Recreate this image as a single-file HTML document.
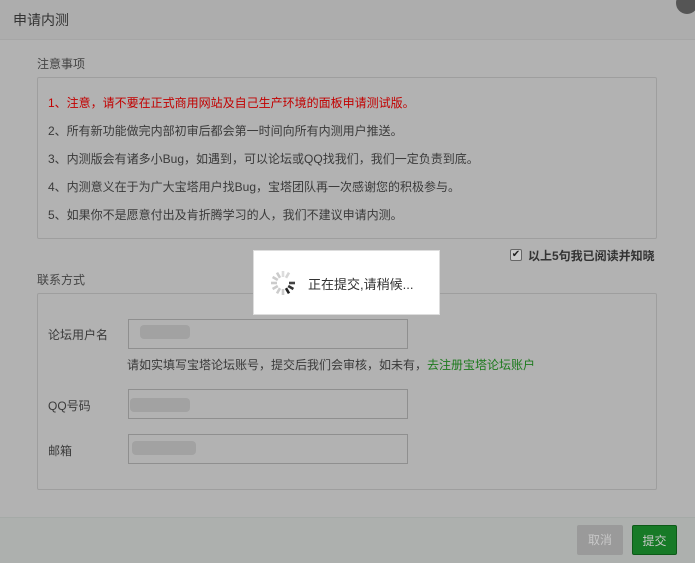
<!DOCTYPE html>
<html><head><meta charset="utf-8"><style>
*{margin:0;padding:0;box-sizing:border-box}
body{width:695px;height:563px;background:#b2b2b2;font-family:"Liberation Sans","Noto Sans CJK SC",sans-serif;font-size:12px;color:#3a3a3a;position:relative;overflow:hidden}
.a{position:absolute;white-space:nowrap}
.hdr{left:0;top:0;width:695px;height:40px;background:#adadad;border-bottom:1px solid #a6a6a6}
.box{border:1px solid #9e9e9e;border-radius:2px}
.inp{border:1px solid #8f8f8f;width:280px;height:30px;background:#b2b2b2}
.blur{background:#a2a2a2;height:14px;border-radius:4px}
.ft{left:0;top:517px;width:695px;height:46px;background:#adb0ae;border-top:1px solid #a5aaa7}
.btn{height:30px;width:46px;border-radius:2px;color:#c8c8c8;text-align:center;line-height:30px}
</style></head><body>
<div class="a hdr"></div>
<div class="a" style="left:13px;top:10px;font-size:14px;color:#333">申请内测</div>
<div class="a" style="left:676px;top:-8px;width:22px;height:22px;border-radius:50%;background:#555"></div>
<div class="a" style="left:37px;top:55px;color:#444">注意事项</div>
<div class="a box" style="left:37px;top:77px;width:620px;height:162px"></div>
<div class="a" style="left:48px;top:94px;color:#c20000">1、注意，请不要在正式商用网站及自己生产环境的面板申请测试版。</div>
<div class="a" style="left:48px;top:122px">2、所有新功能做完内部初审后都会第一时间向所有内测用户推送。</div>
<div class="a" style="left:48px;top:150px">3、内测版会有诸多小Bug，如遇到，可以论坛或QQ找我们，我们一定负责到底。</div>
<div class="a" style="left:48px;top:178px">4、内测意义在于为广大宝塔用户找Bug，宝塔团队再一次感谢您的积极参与。</div>
<div class="a" style="left:48px;top:206px">5、如果你不是愿意付出及肯折腾学习的人，我们不建议申请内测。</div>
<div class="a" style="left:510px;top:249px;width:12px;height:12px;border:1px solid #666;background:#ccc;border-radius:2px;font-size:10px;line-height:10px;text-align:center;color:#222">✔</div>
<div class="a" style="left:528px;top:247px;font-weight:bold;color:#333">以上5句我已阅读并知晓</div>
<div class="a" style="left:37px;top:271px;color:#444">联系方式</div>
<div class="a box" style="left:37px;top:293px;width:620px;height:197px"></div>
<div class="a" style="left:48px;top:326px">论坛用户名</div>
<div class="a inp" style="left:128px;top:319px"></div>
<div class="a blur" style="left:140px;top:325px;width:50px"></div>
<div class="a" style="left:127px;top:356px">请如实填写宝塔论坛账号，提交后我们会审核，如未有，<span style="color:#1d7a1d">去注册宝塔论坛账户</span></div>
<div class="a" style="left:48px;top:397px">QQ号码</div>
<div class="a inp" style="left:128px;top:389px"></div>
<div class="a blur" style="left:130px;top:398px;width:60px"></div>
<div class="a" style="left:48px;top:442px">邮箱</div>
<div class="a inp" style="left:128px;top:434px"></div>
<div class="a blur" style="left:132px;top:441px;width:64px"></div>
<div class="a ft"></div>
<div class="a btn" style="left:577px;top:525px;background:#9a9a9a">取消</div>
<div class="a btn" style="left:632px;top:525px;width:45px;background:#177a27;border:1px solid #0d5a18">提交</div>
<div class="a" style="left:253px;top:250px;width:187px;height:65px;background:#fff;border:1px solid #ddd"></div>
<svg class="a" style="left:268px;top:268px" width="30" height="30" viewBox="-15 -15 30 30">
<g stroke-width="2.6" stroke-linecap="butt">
<line x1="0" y1="-12" x2="0" y2="-6" stroke="#ddd" transform="rotate(0)"/>
<line x1="0" y1="-12" x2="0" y2="-6" stroke="#d6d6d6" transform="rotate(30)"/>
<line x1="0" y1="-12" x2="0" y2="-6" stroke="#444" transform="rotate(90)"/>
<line x1="0" y1="-12" x2="0" y2="-6" stroke="#333" transform="rotate(120)"/>
<line x1="0" y1="-12" x2="0" y2="-6" stroke="#222" transform="rotate(150)"/>
<line x1="0" y1="-12" x2="0" y2="-6" stroke="#ccc" transform="rotate(180)"/>
<line x1="0" y1="-12" x2="0" y2="-6" stroke="#ccc" transform="rotate(210)"/>
<line x1="0" y1="-12" x2="0" y2="-6" stroke="#ccc" transform="rotate(240)"/>
<line x1="0" y1="-12" x2="0" y2="-6" stroke="#ccc" transform="rotate(270)"/>
<line x1="0" y1="-12" x2="0" y2="-6" stroke="#ccc" transform="rotate(300)"/>
<line x1="0" y1="-12" x2="0" y2="-6" stroke="#ccc" transform="rotate(330)"/>
</g></svg>
<div class="a" style="left:308px;top:274px;font-size:13px;color:#333">正在提交,请稍候...</div>
</body></html>
